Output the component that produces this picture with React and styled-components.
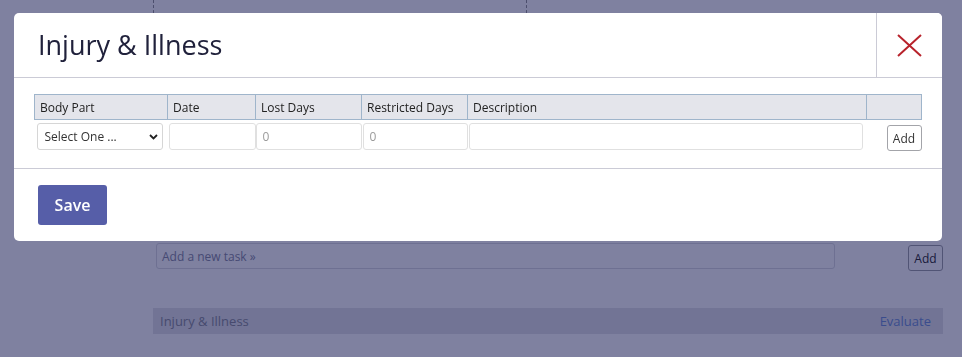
import React from 'react'
import styled, { createGlobalStyle } from 'styled-components'

const GlobalStyle = createGlobalStyle`
  html, body {
    margin: 0;
    padding: 0;
    background: #fff;
    font-family: "Open Sans", "Liberation Sans", sans-serif;
  }
  * { box-sizing: border-box; }
`

/* the page that sits behind the dialog */
const Page = styled.div`
  width: 962px;
  height: 357px;
  overflow: hidden;
  padding: 0 19px 0 153px;
  color: #555;
`
const ColumnGrid = styled.div`
  display: grid;
  grid-template-columns: 373px 1fr;
  height: 240px;
`
const GridCell = styled.div`
  border-left: 1px dashed #999;
`
const TaskRow = styled.div`
  display: flex;
  align-items: flex-start;
  height: 31px;
  padding-top: 3px;
`
const TaskInput = styled.div`
  width: 679px;
  height: 26px;
  margin-left: 3px;
  border: 1px solid #dcdde2;
  border-radius: 3px;
  padding: 0 5px;
  font-size: 12px;
  line-height: 25px;
  color: #8d90a6;
`
const SmallButton = styled.button`
  display: block;
  width: 35px;
  height: 26px;
  padding: 0;
  border: 1px solid #a3a4a9;
  border-radius: 3px;
  background: #fff;
  font-family: inherit;
  font-size: 12px;
  color: #333;
  margin-top: ${p => p.$offset || 0}px;
  margin-left: ${p => (p.$push ? 'auto' : '0')};
`
const SectionBar = styled.div`
  display: flex;
  justify-content: space-between;
  align-items: center;
  height: 26px;
  margin-top: 37px;
  padding: 0 12px 0 7px;
  background: #e4e5e9;
  font-size: 13px;
  color: #8e919b;
`
const BarLink = styled.a`
  color: #7595d8;
  text-decoration: none;
`

const Overlay = styled.div`
  position: fixed;
  inset: 0;
  background: rgba(0, 3, 65, 0.5);
`

/* dialog */
const Modal = styled.div`
  position: fixed;
  top: 13px;
  left: 14px;
  width: 928px;
  background: #fff;
  border-radius: 5px;
  overflow: hidden;
`
const ModalHeader = styled.div`
  display: flex;
  height: 65px;
  border-bottom: 1px solid #cbcbd6;
`
const Title = styled.h2`
  flex: 1;
  margin: 0;
  padding-left: 24px;
  font-size: 27px;
  font-weight: 400;
  line-height: 64px;
  color: #20213b;
`
const CloseButton = styled.button`
  width: 66px;
  display: flex;
  align-items: center;
  justify-content: center;
  border: 0;
  border-left: 1px solid #cbcbd6;
  background: #fff;
  padding: 0;
`
const ModalBody = styled.div`
  padding: 16px 20px 17px;
  border-bottom: 1px solid #cbcbd6;
`
const Grid = styled.table`
  width: 887px;
  border-collapse: collapse;
  table-layout: fixed;
  font-size: 12px;
`
const HeadCell = styled.th`
  height: 25px;
  padding: 0 5px;
  background: #e4e5eb;
  border: 1px solid #9fb5cb;
  font-weight: 400;
  text-align: left;
  color: #222;
  white-space: nowrap;
`
const Cell = styled.td`
  padding: 3px ${p => p.$right || 0}px 0 ${p => p.$left ?? 1}px;
  vertical-align: top;
`
const SelectWrap = styled.div`
  position: relative;
  width: 126px;
`
const Select = styled.select`
  display: block;
  appearance: none;
  width: 100%;
  height: 27px;
  padding: 0 20px 0 7px;
  border: 1px solid #d6d6d6;
  border-radius: 3px;
  background: #fff;
  font-family: inherit;
  font-size: 12px;
  color: #333;
`
const Chevron = styled.svg`
  position: absolute;
  right: 5px;
  top: 11px;
  pointer-events: none;
`
const TextInput = styled.input`
  display: block;
  width: 100%;
  height: 27px;
  padding: 0 6px;
  border: 1px solid #e0e0e0;
  border-radius: 3px;
  font-family: inherit;
  font-size: 12px;
  color: #333;
  &::placeholder { color: #9a9a9a; }
`
const ModalFooter = styled.div`
  padding: 16px 24px;
`
const SaveButton = styled.button`
  width: 69px;
  height: 40px;
  border: 0;
  border-radius: 3px;
  background: #565ea8;
  color: #fff;
  font-family: inherit;
  font-size: 16px;
  font-weight: 600;
`

const columns = [
  ['Body Part', 133],
  ['Date', 88],
  ['Lost Days', 106],
  ['Restricted Days', 106],
  ['Description', 399],
  ['', 55],
]

const App = () => (
  <>
    <GlobalStyle />
    <Page>
      <ColumnGrid>
        <GridCell />
        <GridCell />
      </ColumnGrid>
      <TaskRow>
        <TaskInput>Add a new task »</TaskInput>
        <SmallButton $push $offset={2}>Add</SmallButton>
      </TaskRow>
      <SectionBar>
        <span>Injury &amp; Illness</span>
        <BarLink href="#">Evaluate</BarLink>
      </SectionBar>
    </Page>
    <Overlay />
    <Modal>
      <ModalHeader>
        <Title>Injury &amp; Illness</Title>
        <CloseButton aria-label="Close">
          <svg width="25" height="23" viewBox="0 0 25 23">
            <path d="M1 1 L24 22 M24 1 L1 22" stroke="#b8232c" strokeWidth="2" fill="none" />
          </svg>
        </CloseButton>
      </ModalHeader>
      <ModalBody>
        <Grid>
          <colgroup>
            {columns.map(([name, w], i) => <col key={i} style={{ width: w }} />)}
          </colgroup>
          <thead>
            <tr>
              {columns.map(([name], i) => <HeadCell key={i}>{name}</HeadCell>)}
            </tr>
          </thead>
          <tbody>
            <tr>
              <Cell $left={2}>
                <SelectWrap>
                  <Select defaultValue="">
                    <option value="">Select One ...</option>
                  </Select>
                  <Chevron width="9" height="6" viewBox="0 0 9 6">
                    <path d="M1 1 L4.5 4.5 L8 1" stroke="#222" strokeWidth="1.8" fill="none" />
                  </Chevron>
                </SelectWrap>
              </Cell>
              <Cell><TextInput /></Cell>
              <Cell $left={0}><TextInput placeholder="0" /></Cell>
              <Cell><TextInput placeholder="0" /></Cell>
              <Cell $right={4}><TextInput /></Cell>
              <Cell><SmallButton $push $offset={2}>Add</SmallButton></Cell>
            </tr>
          </tbody>
        </Grid>
      </ModalBody>
      <ModalFooter>
        <SaveButton>Save</SaveButton>
      </ModalFooter>
    </Modal>
  </>
)

export default App
